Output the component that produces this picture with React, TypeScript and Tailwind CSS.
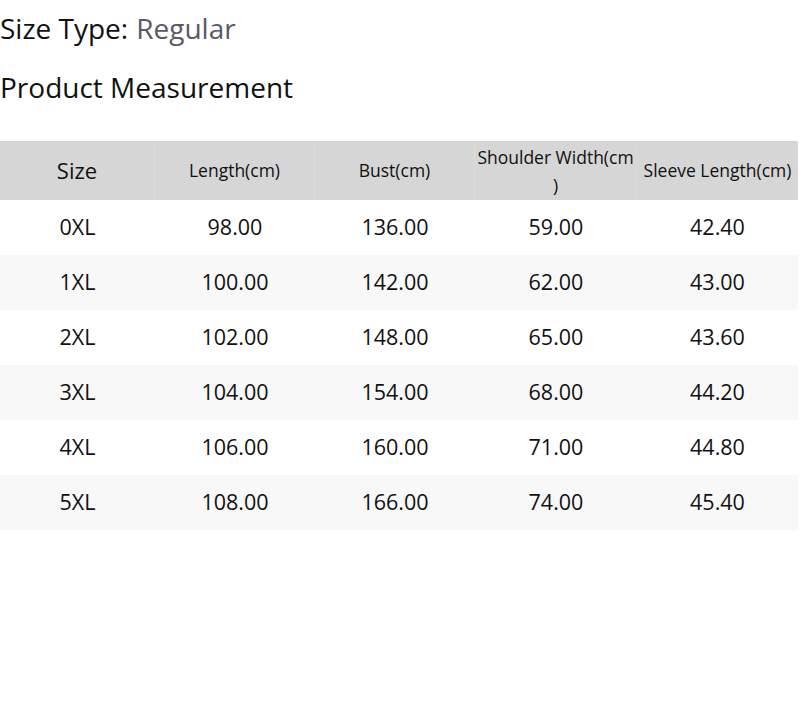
const rows = [
  ["0XL", "98.00", "136.00", "59.00", "42.40"],
  ["1XL", "100.00", "142.00", "62.00", "43.00"],
  ["2XL", "102.00", "148.00", "65.00", "43.60"],
  ["3XL", "104.00", "154.00", "68.00", "44.20"],
  ["4XL", "106.00", "160.00", "71.00", "44.80"],
  ["5XL", "108.00", "166.00", "74.00", "45.40"],
];

const widths = ["w-[155px]", "w-[160px]", "w-[160px]", "w-[162px]", "w-[161px]"];

export default function App() {
  return (
    <div className="w-[800px] h-[720px] bg-white text-[#111] font-['Open_Sans',sans-serif]">
      <div className="h-[56px] flex items-center text-[28px]">
        <span>Size Type:</span>
        <span className="ml-2 text-[#5a5a64]">Regular</span>
      </div>
      <div className="h-[62px] flex items-center text-[28px]">Product Measurement</div>
      <div className="w-[798px] mt-[23px]">
        <div className="flex h-[59px] bg-[#d6d6d6]">
          <div className={`${widths[0]} flex items-center justify-center text-[22px] border-r border-[#dcdcdc]`}>Size</div>
          <div className={`${widths[1]} flex items-center justify-center text-[17.5px] border-r border-[#dcdcdc]`}>Length(cm)</div>
          <div className={`${widths[2]} flex items-center justify-center text-[17.5px] border-r border-[#dcdcdc]`}>Bust(cm)</div>
          <div className={`${widths[3]} flex items-center justify-center text-center text-[17.5px] leading-[28px] whitespace-nowrap border-r border-[#dcdcdc]`}>
            Shoulder Width(cm<br />)
          </div>
          <div className={`${widths[4]} flex items-center justify-center text-[17.5px] whitespace-nowrap`}>Sleeve Length(cm)</div>
        </div>
        {rows.map((r, i) => (
          <div key={i} className={`flex h-[55px] ${i % 2 === 1 ? "bg-[#f8f8f8]" : "bg-white"}`}>
            {r.map((c, j) => (
              <div key={j} className={`${widths[j]} flex items-center justify-center text-[21.5px]`}>{c}</div>
            ))}
          </div>
        ))}
      </div>
    </div>
  );
}
